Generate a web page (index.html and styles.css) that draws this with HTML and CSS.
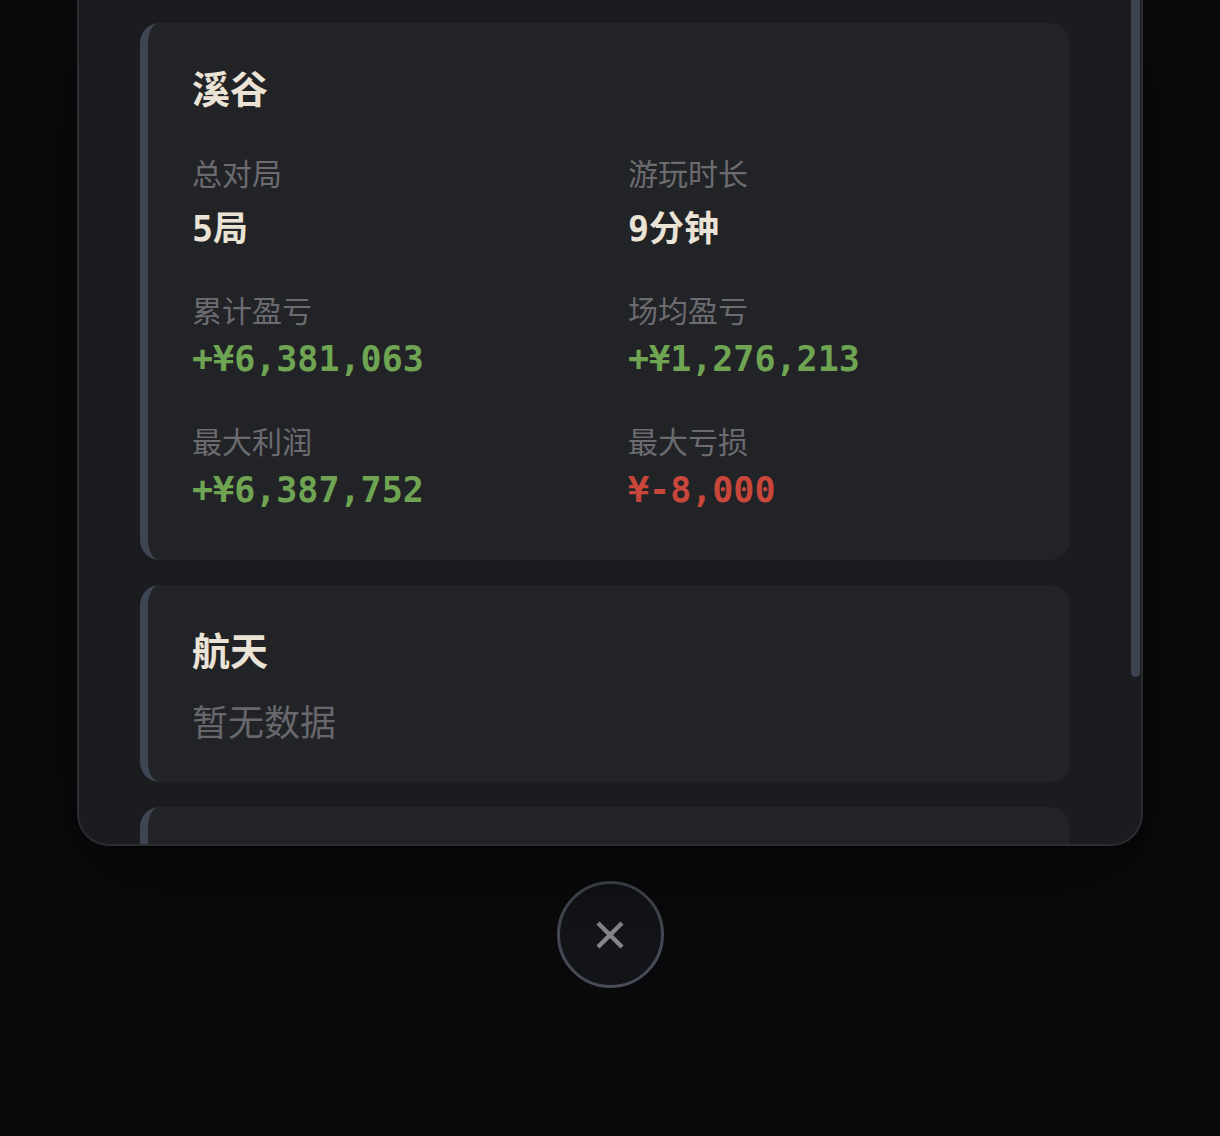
FILE: index.html
```html
<!DOCTYPE html>
<html lang="zh-CN">
<head>
  <meta charset="UTF-8">
  <title>地图战绩</title>
  <link rel="stylesheet" href="styles.css">
</head>
<body>
  <div class="stage">
    <div class="panel">
      <div class="scroll-thumb"></div>
      <div class="list">
        <section class="map-card">
          <h2 class="map-name">溪谷</h2>
          <div class="stats">
            <div class="stat">
              <div class="stat-label">总对局</div>
              <div class="stat-value text">5局</div>
            </div>
            <div class="stat">
              <div class="stat-label">游玩时长</div>
              <div class="stat-value text">9分钟</div>
            </div>
            <div class="stat">
              <div class="stat-label">累计盈亏</div>
              <div class="stat-value pos">+¥6,381,063</div>
            </div>
            <div class="stat">
              <div class="stat-label">场均盈亏</div>
              <div class="stat-value pos">+¥1,276,213</div>
            </div>
            <div class="stat">
              <div class="stat-label">最大利润</div>
              <div class="stat-value pos">+¥6,387,752</div>
            </div>
            <div class="stat">
              <div class="stat-label">最大亏损</div>
              <div class="stat-value neg">¥-8,000</div>
            </div>
          </div>
        </section>

        <section class="map-card">
          <h2 class="map-name">航天</h2>
          <div class="empty">暂无数据</div>
        </section>

        <!-- next map, scrolled below the fold -->
        <section class="map-card next"></section>
      </div>
    </div>

    <button class="close-btn" type="button" aria-label="关闭">
      <svg width="30" height="30" viewBox="0 0 30 30">
        <path d="M3 3 L27 27 M27 3 L3 27" stroke="#8b8b8f" stroke-width="4.5" fill="none"/>
      </svg>
    </button>
  </div>
</body>
</html>
```

FILE: styles.css
```css
body {
  margin: 0;
  height: 1136px;
  overflow: hidden;
  background: #0a0a0c;
  font-family: "Noto Sans CJK SC", "Noto Sans", sans-serif;
}

.stage {
  display: flex;
  flex-direction: column;
  align-items: center;
}

.panel {
  position: relative;
  width: 1066px;
  height: 846px;
  box-sizing: border-box;
  background: #1b1c20;
  border: 2px solid #2b2d33;
  border-top: none;
  border-radius: 0 0 32px 32px;
  overflow: hidden;
  box-shadow: 0 30px 90px rgba(0, 0, 0, 0.55);
}

.scroll-thumb {
  position: absolute;
  top: 0;
  right: 1px;
  width: 9px;
  height: 677px;
  background: #3c4250;
  border-radius: 0 0 5px 5px;
}

.list {
  display: flex;
  flex-direction: column;
  gap: 25px;
  padding: 23px 0 0 61px;
}

.map-card {
  width: 930px;
  box-sizing: border-box;
  background: #222327;
  border-left: 8px solid #3e4553;
  border-radius: 20px;
  padding: 40px 44px 38px;
}

.map-card.next {
  min-height: 200px;
}

.map-name {
  margin: 0;
  font-size: 38px;
  line-height: 48px;
  font-weight: 700;
  color: #ebe3d6;
}

.stats {
  display: grid;
  grid-template-columns: 436px 1fr;
  row-gap: 40px;
  margin-top: 41px;
  margin-bottom: 11px;
}

.stat-label {
  font-size: 30px;
  line-height: 40px;
  color: #6b6b70;
  margin-bottom: 9px;
}

.stat-value {
  font-family: "DejaVu Sans Mono", "Noto Sans CJK SC", monospace;
  font-size: 35px;
  line-height: 42px;
  font-weight: 700;
  color: #ebe3d6;
}

.stat-value.text {
  line-height: 40px;
  padding-top: 8px;
}

.stat-value.pos {
  color: #6fa552;
}

.stat-value.neg {
  color: #c8463a;
}

.empty {
  margin-top: 23px;
  font-size: 36px;
  line-height: 48px;
  color: #67676c;
}

.close-btn {
  margin-top: 35px;
  width: 107px;
  height: 107px;
  box-sizing: border-box;
  border-radius: 50%;
  border: 3px solid #474c58;
  background: #141519;
  display: flex;
  align-items: center;
  justify-content: center;
  padding: 0;
  cursor: pointer;
}
```
